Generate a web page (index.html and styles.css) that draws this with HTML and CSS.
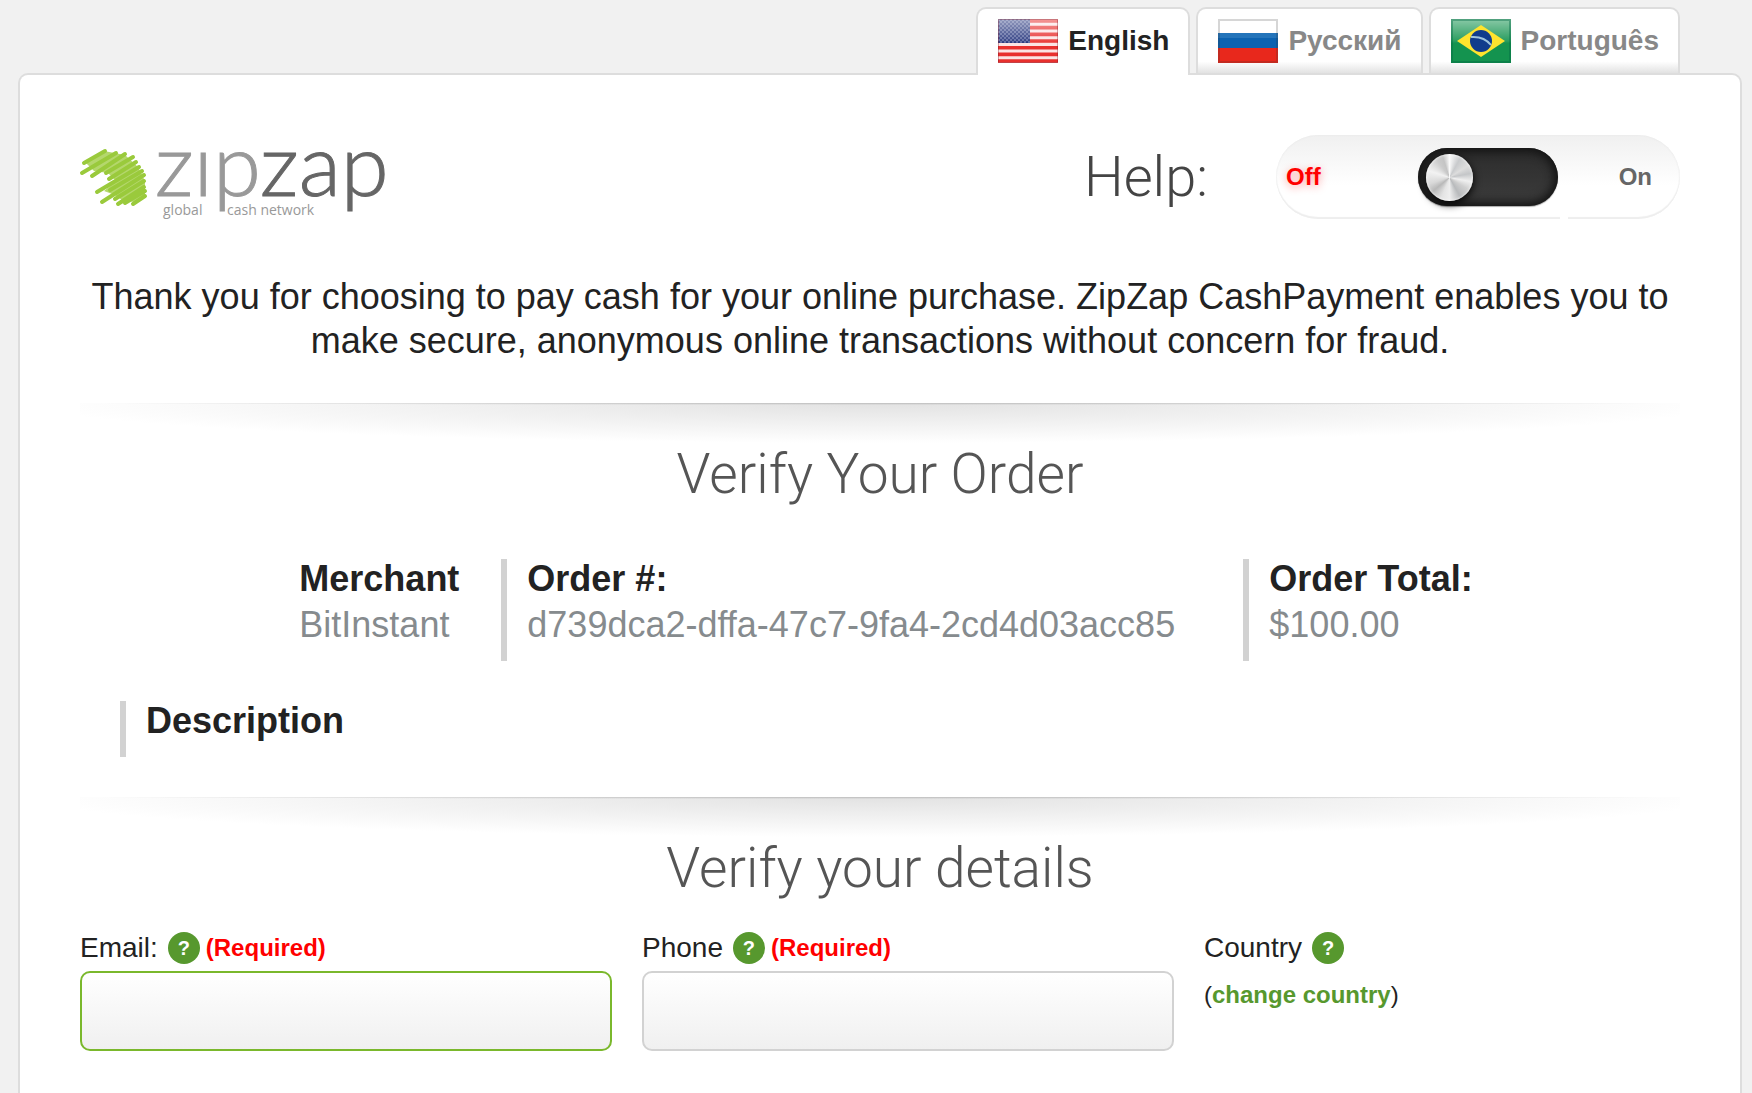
FILE: index.html
```html
<!DOCTYPE html>
<html lang="en">
<head>
<meta charset="utf-8">
<meta name="viewport" content="width=device-width, initial-scale=1">
<title>ZipZap CashPayment</title>
<link rel="stylesheet" href="styles.css">
</head>
<body>
<nav class="tabs" aria-label="Language">
  <a class="tab tab-active" href="#en" aria-current="true">
    <svg class="flag" viewBox="0 0 60 44" aria-hidden="true">
      <defs>
        <linearGradient id="gloss" x1="0" y1="0" x2="0" y2="1">
          <stop offset="0" stop-color="#fff" stop-opacity=".5"/>
          <stop offset=".5" stop-color="#fff" stop-opacity=".1"/>
          <stop offset=".55" stop-color="#fff" stop-opacity="0"/>
        </linearGradient>
        <pattern id="stars" width="4" height="4" patternUnits="userSpaceOnUse">
          <rect width="4" height="4" fill="#26357c"/>
          <rect width="2" height="2" fill="#5a669f"/>
          <rect x="2" y="2" width="2" height="2" fill="#5a669f"/>
        </pattern>
      </defs>
      <rect width="60" height="44" fill="#fbe4e4"/>
      <path d="M0 2h60M0 8.600h60M0 15.400h60M0 22h60M0 28.700h60M0 35.400h60M0 42h60" stroke="#e8302e" stroke-width="3.600"/>
      <rect width="32" height="24" fill="url(#stars)"/>
      <rect width="60" height="44" fill="url(#gloss)"/>
      <rect x=".5" y=".5" width="59" height="43" fill="none" stroke="#712" stroke-opacity=".35"/>
    </svg>
    English
  </a>
  <a class="tab" href="#ru">
    <svg class="flag" viewBox="0 0 60 44" aria-hidden="true">
      <rect width="60" height="15" fill="#fff"/>
      <rect y="14" width="60" height="15" fill="#0c62b0"/>
      <rect y="14" width="60" height="5" fill="#2474ba"/>
      <rect y="29" width="60" height="15" fill="#e8281c"/>
      <rect x="1" y="1" width="58" height="42" fill="none" stroke="#333" stroke-opacity=".2" stroke-width="2"/>
    </svg>
    Русский
  </a>
  <a class="tab" href="#pt">
    <svg class="flag" viewBox="0 0 60 44" aria-hidden="true">
      <rect width="60" height="44" fill="#14934f"/>
      <rect width="60" height="44" fill="url(#gloss)"/>
      <path d="M30 6L54 22L30 38L6 22Z" fill="#ffe42e"/>
      <circle cx="30" cy="22" r="11" fill="#103c8c"/>
      <path d="M20 18Q33 17 40 26" fill="none" stroke="#9cc3dc" stroke-width="2"/>
      <rect x="1" y="1" width="58" height="42" fill="none" stroke="#064" stroke-opacity=".4" stroke-width="2"/>
    </svg>
    Português
  </a>
</nav>

<main class="panel">
  <header class="header">
    <svg class="logo" viewBox="0 0 310 84" role="img" aria-label="zipzap global cash network">
      <path d="M6 28L24 16L45 20L58 32L65 46L65 60L54 67L42 65L35 60L24 56L36 46L28 38L14 36Z" fill="#b4d76c"/>
      <path d="M4 28L25 16M2 38L36 18M12 41L45 19M26 38L53 22M29 44L56 27M17 57L59 32M30 55L62 36M22 67L64 40M35 64L64 46M38 69L64 52M45 68L65 56M53 69L65 61" fill="none" stroke="#9aca3c" stroke-width="4" stroke-linecap="round"/>
      <text class="logo-word" x="75" y="61"><tspan class="logo-zip">zıp</tspan><tspan class="logo-zap">zap</tspan></text>
      <text class="logo-tag" x="83" y="80">global</text>
      <text class="logo-tag" x="147" y="80">cash network</text>
    </svg>
    <div class="help">
      <label class="help-label" for="help-switch">Help:</label>
      <div class="switch">
        <span class="switch-off">Off</span>
        <input class="switch-track" type="checkbox" role="switch" id="help-switch">
        <span class="switch-on">On</span>
      </div>
    </div>
  </header>

  <p class="intro">Thank you for choosing to pay cash for your online purchase. ZipZap CashPayment enables you to make secure, anonymous online transactions without concern for fraud.</p>

  <section class="section">
    <h2 class="title">Verify Your Order</h2>
    <dl class="order">
      <div class="order-item order-merchant">
        <dt>Merchant</dt>
        <dd>BitInstant</dd>
      </div>
      <div class="order-item order-number ruled">
        <dt>Order #:</dt>
        <dd>d739dca2-dffa-47c7-9fa4-2cd4d03acc85</dd>
      </div>
      <div class="order-item ruled">
        <dt>Order Total:</dt>
        <dd>$100.00</dd>
      </div>
    </dl>
    <h3 class="description ruled">Description</h3>
  </section>

  <section class="section">
    <h2 class="title">Verify your details</h2>
    <form class="details">
      <div class="field">
        <div class="field-head">
          <label for="email">Email:</label>
          <button class="hint" type="button" aria-label="About email">?</button>
          <strong class="required">(Required)</strong>
        </div>
        <input class="input input-current" type="email" id="email" required>
      </div>
      <div class="field">
        <div class="field-head">
          <label for="phone">Phone</label>
          <button class="hint" type="button" aria-label="About phone">?</button>
          <strong class="required">(Required)</strong>
        </div>
        <input class="input" type="tel" id="phone" required>
      </div>
      <div class="field">
        <div class="field-head">
          <span>Country</span>
          <button class="hint" type="button" aria-label="About country">?</button>
        </div>
        <p class="change">(<a href="#country">change country</a>)</p>
      </div>
    </form>
  </section>
</main>
</body>
</html>
```
FILE: styles.css
```css
* {
  box-sizing: border-box;
}

body {
  display: flex;
  flex-direction: column;
  min-height: 100vh;
  margin: 0;
  padding: 7px 10px 0 18px;
  background: #f1f1f1;
  color: #222;
  font-family: "Liberation Sans", Arial, sans-serif;
}

.tabs {
  display: flex;
  justify-content: flex-end;
  gap: 6px;
  padding-right: 62px;
}

.tab {
  display: flex;
  align-items: center;
  gap: 10px;
  padding: 10px 19px 10px 20px;
  border: 2px solid #ddd;
  border-bottom: 0;
  border-radius: 10px 10px 0 0;
  background: linear-gradient(#fff 82%, #e2e2e2);
  color: #888;
  font-size: 28px;
  font-weight: bold;
  line-height: 32px;
  text-decoration: none;
}

.tab-active {
  position: relative;
  margin-bottom: -2px;
  padding-bottom: 12px;
  background: #fff;
  color: #222;
}

.flag {
  display: block;
  width: 60px;
  height: 44px;
}

.panel {
  flex: 1;
  padding: 60px 60px 40px;
  border: 2px solid #ddd;
  border-bottom: 0;
  border-radius: 10px 10px 0 0;
  background: #fff;
}

.header {
  display: flex;
  justify-content: space-between;
}

.logo {
  width: 310px;
  height: 84px;
  overflow: visible;
}

.logo-word {
  font: 300 87px Lato, sans-serif;
  stroke-width: 1px;
}

.logo-zip {
  fill: #999;
  stroke: #999;
}

.logo-zap {
  fill: #666;
  stroke: #666;
}

.logo-tag {
  fill: #999;
  font: 14px "Open Sans", sans-serif;
}

.help {
  display: flex;
  align-items: center;
  gap: 68px;
}

.help-label,
.title {
  color: #444;
  font-family: Roboto, "Liberation Sans", sans-serif;
  font-size: 56px;
  font-weight: 300;
  line-height: 64px;
}

.switch {
  position: relative;
  display: grid;
  grid-template-columns: 132px 140px 1fr;
  align-items: center;
  width: 404px;
  height: 84px;
  padding: 0 28px 0 10px;
  border-radius: 42px;
  background: linear-gradient(#f0f0f0, #fff 60%);
  box-shadow: inset 0 -2px 1px #eee, inset 0 0 2px #e4e4e4;
  font-size: 24px;
  font-weight: bold;
  line-height: 32px;
}

/* Break in the lower rim of the switch plate. */
.switch::after {
  content: "";
  position: absolute;
  right: 112px;
  bottom: 0;
  width: 8px;
  height: 3px;
  background: #fff;
}

.switch-off {
  color: #f00;
  text-shadow: 0 2px 8px rgba(255, 0, 0, .4);
}

.switch-on {
  justify-self: end;
  color: #666;
}

.switch-track {
  display: flex;
  align-items: center;
  width: 140px;
  height: 58px;
  margin: 0;
  padding: 0 8px;
  appearance: none;
  border-radius: 29px;
  background: linear-gradient(#2c2c2c, #3c3c3c);
  box-shadow: inset 0 0 10px 4px #141414, 0 1px 1px #aaa;
}

.switch-track::before {
  content: "";
  width: 47px;
  height: 47px;
  border-radius: 50%;
  background: conic-gradient(#fafafa, #c8cacc 8%, #ddd 16%, #c4c6c8 22%, #f0f0f0 28%, #d0d0d0 34%, #b8babc 42%, #eee 50%, #e4e4e4 56%, #b8b8b8 64%, #d8d8d8 70%, #f2f2f2 80%, #ccc 90%, #c4c4c4 95%, #fafafa);
  box-shadow: inset 0 0 3px #fff, 0 3px 8px #000;
}

.switch-track:checked {
  justify-content: flex-end;
}

.intro {
  margin: 56px 0 40px;
  font-size: 36px;
  line-height: 44px;
  text-align: center;
}

/* Each section opens with a hairline and a shadow that fades to both ends. */
.section {
  padding-top: 39px;
  background:
    radial-gradient(ellipse 50% 2px at 50% 0, #bbb, transparent) top / 100% 2px no-repeat,
    radial-gradient(ellipse 53% 40px at 50% 0, #e2e2e2, transparent) top / 100% 40px no-repeat;
}

.title {
  margin: 0;
  color: #555;
  font-size: 55px;
  text-align: center;
}

.order {
  display: flex;
  justify-content: center;
  gap: 40px;
  margin: 53px 0 40px;
  padding-left: 12px;
  font-size: 36px;
  line-height: 40px;
}

.order-item {
  padding-bottom: 16px;
}

.order-merchant {
  min-width: 162px;
}

.order-number {
  min-width: 702px;
}

.order dt {
  margin-bottom: 6px;
  font-weight: bold;
}

.order dd {
  margin: 0;
  color: #868b8e;
}

.ruled {
  padding-left: 20px;
  border-left: 6px solid #d2d2d2;
}

.description {
  margin: 0 40px 40px;
  padding-bottom: 16px;
  font-size: 36px;
  line-height: 40px;
}

.details {
  display: grid;
  grid-template-columns: 38fr 38fr 34fr;
  gap: 30px;
  margin-top: 31px;
}

.field-head {
  display: flex;
  align-items: center;
  height: 34px;
  margin-bottom: 6px;
  font-size: 28px;
  line-height: 32px;
}

.hint {
  width: 32px;
  height: 32px;
  margin: 0 6px 0 10px;
  padding: 0;
  border: 0;
  border-radius: 50%;
  background: #57982e;
  color: #fff;
  font: bold 20px/32px "Liberation Sans", Arial, sans-serif;
}

.required {
  color: #f00;
  font-size: 24px;
}

.input {
  display: block;
  width: 100%;
  height: 80px;
  padding: 0 20px;
  border: 2px solid #d2d2d2;
  border-radius: 10px;
  background: linear-gradient(#fff, #f0f0f0);
  color: #222;
  font: 28px "Liberation Sans", Arial, sans-serif;
}

.input-current {
  border-color: #7ab82c;
}

.change {
  margin: 0;
  padding-top: 8px;
  font-size: 24px;
  line-height: 32px;
}

.change a {
  color: #57982e;
  font-weight: bold;
  text-decoration: none;
}
```
